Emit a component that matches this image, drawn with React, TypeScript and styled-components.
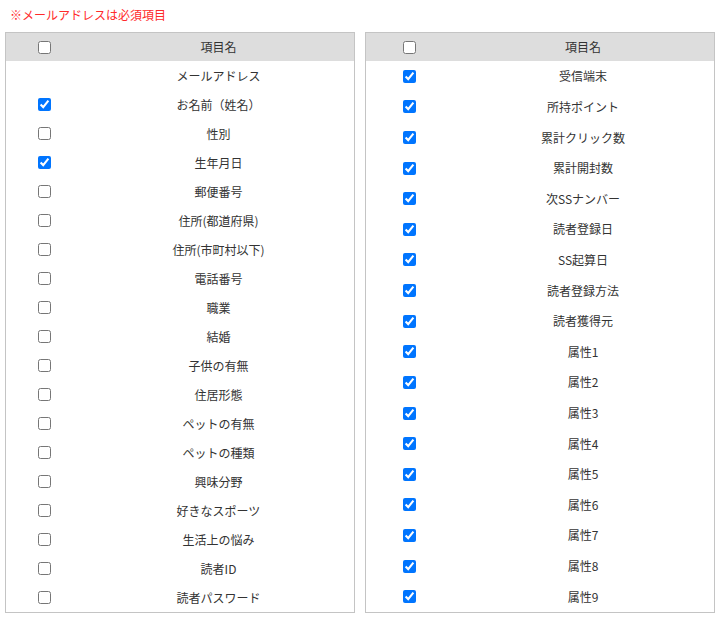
import React from "react";
import styled, { createGlobalStyle } from "styled-components";

const Global = createGlobalStyle`
  html, body { margin: 0; padding: 0; background: #fff; }
  body { font-family: "Noto Sans CJK JP", "Noto Sans", sans-serif; color: #333; }
`;

const Page = styled.div`
  width: 710px;
  padding: 5px 0 0 5px;
`;

const Notice = styled.div`
  color: #ff2a2a;
  font-size: 12px;
  line-height: 20px;
  margin: 0 0 7px 5px;
`;

const Columns = styled.div`
  display: flex;
  gap: 10px;
  align-items: stretch;
`;

const Panel = styled.div`
  width: 350px;
  box-sizing: border-box;
  border: 1px solid #c4c4c4;
  display: flex;
  flex-direction: column;
`;

const HeadRow = styled.div<{ $col: number }>`
  display: grid;
  grid-template-columns: ${(p) => p.$col}px 1fr;
  align-items: center;
  height: 28px;
  background: #dddddd;
  font-size: 12px;
`;

const Row = styled.div<{ $fixed?: boolean; $col: number }>`
  display: grid;
  grid-template-columns: ${(p) => p.$col}px 1fr;
  align-items: center;
  font-size: 12px;
  ${(p) => (p.$fixed ? "height: 29px;" : "flex: 1;")}
`;

const BoxCell = styled.div`
  display: flex;
  justify-content: center;
  align-items: center;
`;

const Check = styled.input`
  width: 13px;
  height: 13px;
  margin: 0;
`;

const Label = styled.div`
  text-align: center;
  line-height: 18px;
`;

const left: [string, boolean | null][] = [
  ["メールアドレス", null],
  ["お名前（姓名）", true],
  ["性別", false],
  ["生年月日", true],
  ["郵便番号", false],
  ["住所(都道府県)", false],
  ["住所(市町村以下)", false],
  ["電話番号", false],
  ["職業", false],
  ["結婚", false],
  ["子供の有無", false],
  ["住居形態", false],
  ["ペットの有無", false],
  ["ペットの種類", false],
  ["興味分野", false],
  ["好きなスポーツ", false],
  ["生活上の悩み", false],
  ["読者ID", false],
  ["読者パスワード", false],
];

const right: string[] = [
  "受信端末",
  "所持ポイント",
  "累計クリック数",
  "累計開封数",
  "次SSナンバー",
  "読者登録日",
  "SS起算日",
  "読者登録方法",
  "読者獲得元",
  "属性1",
  "属性2",
  "属性3",
  "属性4",
  "属性5",
  "属性6",
  "属性7",
  "属性8",
  "属性9",
];

const Header = ({ col }: { col: number }) => (
  <HeadRow $col={col}>
    <BoxCell>
      <Check type="checkbox" readOnly />
    </BoxCell>
    <Label>項目名</Label>
  </HeadRow>
);

export default function App() {
  return (
    <Page>
      <Global />
      <Notice>※メールアドレスは必須項目</Notice>
      <Columns>
        <Panel>
          <Header col={77} />
          {left.map(([name, checked]) => (
            <Row $fixed $col={77} key={name}>
              <BoxCell>
                {checked !== null && (
                  <Check type="checkbox" readOnly checked={checked} />
                )}
              </BoxCell>
              <Label>{name}</Label>
            </Row>
          ))}
        </Panel>
        <Panel>
          <Header col={86} />
          {right.map((name) => (
            <Row $col={86} key={name}>
              <BoxCell>
                <Check type="checkbox" readOnly checked />
              </BoxCell>
              <Label>{name}</Label>
            </Row>
          ))}
        </Panel>
      </Columns>
    </Page>
  );
}
